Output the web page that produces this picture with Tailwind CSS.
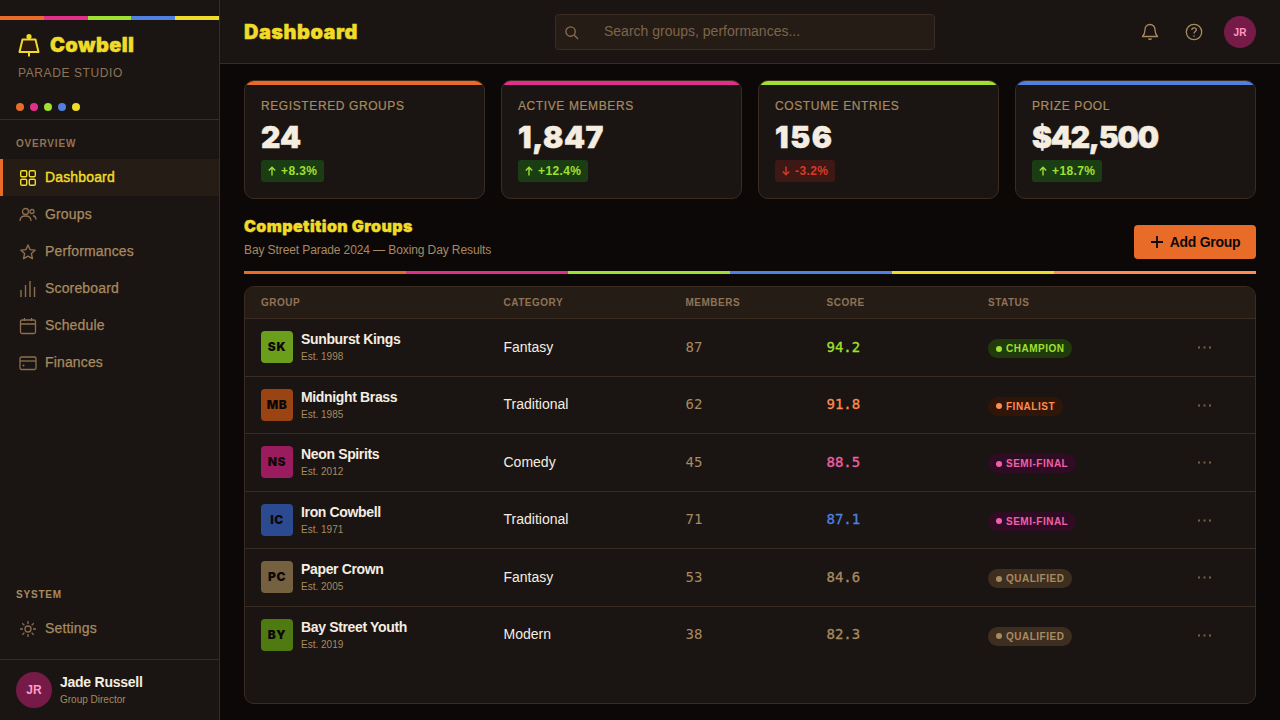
<!DOCTYPE html>
<html lang="en">
<head>
    <meta charset="UTF-8">
    <meta name="viewport" content="width=device-width, initial-scale=1.0">
    <title>Cowbell - Dashboard</title>
    <script src="https://cdn.jsdelivr.net/npm/@tailwindcss/browser@4"></script>
</head>
<body class="bg-[#0d0808] font-['Liberation_Sans',Arial,sans-serif] text-[#f5ede0] overflow-hidden">
<div class="flex h-[720px] w-[1280px] overflow-hidden">

    <!-- Sidebar -->
    <aside class="flex h-full w-[220px] shrink-0 flex-col border-r border-[#3a2c20] bg-[#1a1512]">
        <div class="mt-4 flex h-1 shrink-0">
            <div class="w-[44px] bg-[#e86c28]"></div>
            <div class="w-[44px] bg-[#e0308a]"></div>
            <div class="w-[43px] bg-[#a0e030]"></div>
            <div class="w-[44px] bg-[#5080e0]"></div>
            <div class="flex-1 bg-[#f0dc28]"></div>
        </div>
        <div class="h-[100px] shrink-0 border-b border-[#3a2c20] pl-4 pt-[13px]">
            <div class="flex items-center gap-[10px] pl-[2px]">
                <svg class="h-6 w-[22px]" viewBox="0 0 22 24" fill="none" stroke="#f0dc28" stroke-width="2">
                    <circle cx="11" cy="3.500" r="1.600" fill="#f0dc28"/>
                    <path d="M4.500 6.500h13L20.500 19h-19z" fill="#2e1a0c" stroke-linejoin="round"/>
                    <path d="M11 19v4.500"/>
                </svg>
                <span class="font-['Inter',sans-serif] text-[20px] leading-6 font-black tracking-[0.37px] text-[#f0dc28] [-webkit-text-stroke:0.4px_currentColor]">Cowbell</span>
            </div>
            <div class="mt-[8px] pl-[2px] text-[12px] leading-4 tracking-[0.6px] text-[#8f7355]">PARADE STUDIO</div>
            <div class="mt-[22px] flex gap-[6px]">
                <span class="size-2 rounded-full bg-[#e86c28]"></span>
                <span class="size-2 rounded-full bg-[#e0308a]"></span>
                <span class="size-2 rounded-full bg-[#a0e030]"></span>
                <span class="size-2 rounded-full bg-[#5080e0]"></span>
                <span class="size-2 rounded-full bg-[#f0dc28]"></span>
            </div>
        </div>

        <div class="pl-4 pt-[18px] pb-[9px] text-[10px] leading-[12px] font-bold tracking-[0.8px] text-[#8f7355]">OVERVIEW</div>
        <nav class="text-[14px] tracking-[0.15px] text-[#a88a60] [-webkit-text-stroke:0.25px_currentColor]">
            <a class="flex h-[37px] items-center gap-[8px] border-l-[3px] border-[#e86c28] bg-[#261c16] pl-4 text-[#f0dc28] [-webkit-text-stroke:0.4px_currentColor]">
                <svg class="size-[18px]" viewBox="0 0 18 18" fill="none" stroke="currentColor" stroke-width="1.400"><rect x="1.700" y="1.700" width="6" height="6" rx="1.200"/><rect x="10.300" y="1.700" width="6" height="6" rx="1.200"/><rect x="1.700" y="10.300" width="6" height="6" rx="1.200"/><rect x="10.300" y="10.300" width="6" height="6" rx="1.200"/></svg>
                Dashboard
            </a>
            <a class="flex h-[37px] items-center gap-[8px] pl-[19px]">
                <svg class="size-[18px] text-[#8b6f4e]" viewBox="0 0 18 18" fill="none" stroke="currentColor" stroke-width="1.300"><circle cx="6.500" cy="5.500" r="3"/><path d="M1 15c0-3.300 2.400-5 5.500-5s5.500 1.700 5.500 5"/><circle cx="13" cy="5.500" r="2"/><path d="M14 9.500c1.800.5 3 2 3 4"/></svg>
                Groups
            </a>
            <a class="flex h-[37px] items-center gap-[8px] pl-[19px]">
                <svg class="size-[18px] text-[#8b6f4e]" viewBox="0 0 18 18" fill="none" stroke="currentColor" stroke-width="1.400" stroke-linejoin="round"><path d="M9 2l2.100 4.600 5 .6-3.700 3.400 1 5L9 13.100l-4.400 2.500 1-5-3.700-3.400 5-.6z"/></svg>
                Performances
            </a>
            <a class="flex h-[37px] items-center gap-[8px] pl-[19px]">
                <svg class="size-[18px] text-[#8b6f4e]" viewBox="0 0 18 18" fill="none" stroke="currentColor" stroke-width="1.400"><path d="M2 17v-7M6.500 17V5M11 17V1M15.500 17V7"/></svg>
                Scoreboard
            </a>
            <a class="flex h-[37px] items-center gap-[8px] pl-[19px]">
                <svg class="size-[18px] text-[#8b6f4e]" viewBox="0 0 18 18" fill="none" stroke="currentColor" stroke-width="1.300"><rect x="1.500" y="3" width="15" height="13.500" rx="1.500"/><path d="M1.500 7h15M5.500 1v3M12.500 1v3"/></svg>
                Schedule
            </a>
            <a class="flex h-[37px] items-center gap-[8px] pl-[19px]">
                <svg class="size-[18px] text-[#8b6f4e]" viewBox="0 0 18 18" fill="none" stroke="currentColor" stroke-width="1.300"><rect x="1" y="3" width="16" height="12.500" rx="1.500"/><path d="M1 7h16"/><circle cx="4.500" cy="11.500" r="1" fill="currentColor" stroke="none"/></svg>
                Finances
            </a>
        </nav>

        <div class="mt-auto pl-4 pb-[9px] text-[10px] leading-[12px] font-bold tracking-[0.8px] text-[#a88a60]">SYSTEM</div>
        <a class="flex h-[37px] items-center gap-[8px] pl-[19px] text-[14px] tracking-[0.15px] text-[#a88a60] [-webkit-text-stroke:0.25px_currentColor]">
            <svg class="size-[18px] text-[#8b6f4e]" viewBox="0 0 18 18" fill="none" stroke="currentColor" stroke-width="1.300"><circle cx="9" cy="9" r="3"/><path d="M9 1v3M9 14v3M1 9h3M14 9h3M3.300 3.300l2.100 2.100M12.600 12.600l2.100 2.100M3.300 14.700l2.100-2.100M12.600 5.400l2.100-2.100"/></svg>
            Settings
        </a>
        <div class="mt-[12px] flex h-[61px] shrink-0 items-center gap-2 border-t border-[#3a2c20] pl-4">
            <div class="flex size-9 items-center justify-center rounded-full bg-[#761a48] text-[12px] font-bold text-[#ff9ac8]">JR</div>
            <div>
                <div class="text-[14px] leading-[17px] font-bold tracking-[-0.25px] text-[#f5ede0]">Jade Russell</div>
                <div class="mt-[2px] text-[10px] leading-[13px] text-[#a88a60]">Group Director</div>
            </div>
        </div>
    </aside>

    <!-- Main -->
    <div class="flex h-full min-w-0 flex-1 flex-col">
        <header class="relative flex h-[64px] shrink-0 items-center justify-between border-b border-[#3a2c20] bg-[#1a1512] px-6 pt-px">
            <h1 class="font-['Inter',sans-serif] text-[20px] font-black tracking-[0.47px] text-[#f0dc28] [-webkit-text-stroke:0.4px_currentColor]">Dashboard</h1>
            <div class="absolute left-[335px] top-[14px] flex h-9 w-[380px] items-center rounded border border-[#3a2c20] bg-[#261c16] pl-2">
                <svg class="size-[15px] text-[#8b6f4e]" viewBox="0 0 16 16" fill="none" stroke="currentColor" stroke-width="1.400"><circle cx="7" cy="7" r="5"/><path d="M11 11l4 4"/></svg>
                <span class="-mt-[1px] ml-[25px] text-[14px] text-[#7d654a]">Search groups, performances...</span>
            </div>
            <div class="flex items-center">
                <svg class="size-[18px] text-[#a88a60]" viewBox="0 0 18 18" fill="none" stroke="currentColor" stroke-width="1.300" stroke-linejoin="round"><path d="M9 1.500c-3 0-5 2.300-5 5.200 0 4-1.500 5.800-2.500 6.800h15c-1-1-2.500-2.800-2.500-6.800 0-2.900-2-5.200-5-5.200z"/><path d="M7.500 15.500c.3 1 2.700 1 3 0"/></svg>
                <svg class="ml-[26px] size-[18px] text-[#a88a60]" viewBox="0 0 18 18" fill="none" stroke="currentColor" stroke-width="1.300"><circle cx="9" cy="9" r="7.700"/><path d="M6.800 7c0-1.300 1-2.200 2.300-2.200s2.200.9 2.200 2c0 1.700-2.300 1.800-2.300 3.700"/><circle cx="9" cy="13" r=".8" fill="currentColor" stroke="none"/></svg>
                <div class="ml-[21px] flex size-8 items-center justify-center rounded-full bg-[#761a48] text-[10px] font-bold text-[#ff9ac8]">JR</div>
            </div>
        </header>

        <main class="flex min-h-0 flex-1 flex-col px-6 pt-4 pb-4">
            <!-- Stat cards -->
            <section class="grid shrink-0 grid-cols-4 gap-4">
                <div class="h-[119px] overflow-hidden rounded-[10px] border border-[#3a2c20] bg-[#1a1512]">
                    <div class="h-1 bg-[#e86c28]"></div>
                    <div class="px-4 pt-[13px]">
                        <div class="text-[12px] leading-4 tracking-[0.6px] text-[#a88a60] [-webkit-text-stroke:0.2px_currentColor]">REGISTERED GROUPS</div>
                        <div class="mt-[5px] font-['Inter',sans-serif] text-[30px] leading-9 font-black text-[#f5ede0] [-webkit-text-stroke:0.5px_currentColor]">24</div>
                        <div class="mt-[5px] inline-flex h-[22px] items-center gap-[4px] rounded-[3px] bg-[#1a3d14] pr-[7px] pl-[6px] text-[12px] font-bold tracking-[0.4px] text-[#a0e030]">
                            <svg class="size-[10px]" viewBox="0 0 10 10" fill="none" stroke="currentColor" stroke-width="1.400"><path d="M5 9.500V1.500M1.800 4.500L5 1.300l3.200 3.200"/></svg>+8.3%
                        </div>
                    </div>
                </div>
                <div class="h-[119px] overflow-hidden rounded-[10px] border border-[#3a2c20] bg-[#1a1512]">
                    <div class="h-1 bg-[#e0308a]"></div>
                    <div class="px-4 pt-[13px]">
                        <div class="text-[12px] leading-4 tracking-[0.6px] text-[#a88a60] [-webkit-text-stroke:0.2px_currentColor]">ACTIVE MEMBERS</div>
                        <div class="mt-[5px] font-['Inter',sans-serif] text-[30px] leading-9 font-black tracking-[0.6px] text-[#f5ede0] [-webkit-text-stroke:0.5px_currentColor]">1,847</div>
                        <div class="mt-[5px] inline-flex h-[22px] items-center gap-[4px] rounded-[3px] bg-[#1a3d14] pr-[7px] pl-[6px] text-[12px] font-bold tracking-[0.4px] text-[#a0e030]">
                            <svg class="size-[10px]" viewBox="0 0 10 10" fill="none" stroke="currentColor" stroke-width="1.400"><path d="M5 9.500V1.500M1.800 4.500L5 1.300l3.200 3.200"/></svg>+12.4%
                        </div>
                    </div>
                </div>
                <div class="h-[119px] overflow-hidden rounded-[10px] border border-[#3a2c20] bg-[#1a1512]">
                    <div class="h-1 bg-[#a0e030]"></div>
                    <div class="px-4 pt-[13px]">
                        <div class="text-[12px] leading-4 tracking-[0.6px] text-[#a88a60] [-webkit-text-stroke:0.2px_currentColor]">COSTUME ENTRIES</div>
                        <div class="mt-[5px] font-['Inter',sans-serif] text-[30px] leading-9 font-black tracking-[1.6px] text-[#f5ede0] [-webkit-text-stroke:0.5px_currentColor]">156</div>
                        <div class="mt-[5px] inline-flex h-[22px] items-center gap-[4px] rounded-[3px] bg-[#3d1814] pr-[7px] pl-[6px] text-[12px] font-bold tracking-[0.4px] text-[#d83a28]">
                            <svg class="size-[10px]" viewBox="0 0 10 10" fill="none" stroke="currentColor" stroke-width="1.400"><path d="M5 .5v8M1.800 5.500L5 8.700l3.200-3.200"/></svg>-3.2%
                        </div>
                    </div>
                </div>
                <div class="h-[119px] overflow-hidden rounded-[10px] border border-[#3a2c20] bg-[#1a1512]">
                    <div class="h-1 bg-[#5080e0]"></div>
                    <div class="px-4 pt-[13px]">
                        <div class="text-[12px] leading-4 tracking-[0.6px] text-[#a88a60] [-webkit-text-stroke:0.2px_currentColor]">PRIZE POOL</div>
                        <div class="mt-[5px] font-['Inter',sans-serif] text-[30px] leading-9 font-black tracking-[-1.2px] text-[#f5ede0] [-webkit-text-stroke:0.5px_currentColor]">$42,500</div>
                        <div class="mt-[5px] inline-flex h-[22px] items-center gap-[4px] rounded-[3px] bg-[#1a3d14] pr-[7px] pl-[6px] text-[12px] font-bold tracking-[0.4px] text-[#a0e030]">
                            <svg class="size-[10px]" viewBox="0 0 10 10" fill="none" stroke="currentColor" stroke-width="1.400"><path d="M5 9.500V1.500M1.800 4.500L5 1.300l3.200 3.200"/></svg>+18.7%
                        </div>
                    </div>
                </div>
            </section>

            <!-- Section heading -->
            <section class="mt-[17px] flex h-[43px] shrink-0 items-end justify-between">
                <div>
                    <h2 class="font-['Inter',sans-serif] text-[16px] leading-5 font-black tracking-[0.4px] text-[#f0dc28] [-webkit-text-stroke:0.4px_currentColor]">Competition Groups</h2>
                    <p class="mt-[5px] text-[12px] leading-[18px] tracking-[-0.1px] text-[#a88a60]">Bay Street Parade 2024 — Boxing Day Results</p>
                </div>
                <button class="flex h-[34px] w-[122px] items-center justify-center gap-[6px] rounded bg-[#e86c28] text-[14px] font-bold tracking-[-0.3px] text-[#0d0808]">
                    <svg class="size-[14px]" viewBox="0 0 14 14" fill="none" stroke="currentColor" stroke-width="1.800"><path d="M7 1v12M1 7h12"/></svg>
                    Add Group
                </button>
            </section>
            <div class="mt-[12px] flex h-[3px] shrink-0">
                <div class="w-[16%] bg-[#e86c28]"></div>
                <div class="w-[16%] bg-[#e0308a]"></div>
                <div class="w-[16%] bg-[#a0e030]"></div>
                <div class="w-[16%] bg-[#5080e0]"></div>
                <div class="w-[16%] bg-[#f0dc28]"></div>
                <div class="flex-1 bg-[#ff8c50]"></div>
            </div>

            <!-- Table -->
            <section class="mt-3 min-h-0 flex-1 overflow-hidden rounded-[10px] border border-[#3a2c20] bg-[#1a1512]">
                <div class="grid h-[32px] grid-cols-[242.5px_182px_141px_161.5px_1fr] items-center border-b border-[#3a2c20] bg-[#261c16] pl-4 text-[10px] font-bold tracking-[0.5px] text-[#8f7355]">
                    <div>GROUP</div><div>CATEGORY</div><div>MEMBERS</div><div>SCORE</div><div>STATUS</div>
                </div>

                <div class="grid h-[57.5px] grid-cols-[242.5px_182px_141px_161.5px_210px_1fr] items-center border-b border-[#3a2c20] pl-4">
                    <div class="flex items-center gap-2">
                        <div class="flex size-8 items-center justify-center rounded bg-[#6b9e1a] font-['Inter',sans-serif] text-[12px] font-black tracking-[0.6px] text-[#0d0808]">SK</div>
                        <div><div class="text-[14px] leading-[17px] font-bold tracking-[-0.35px]">Sunburst Kings</div><div class="mt-[2px] text-[10px] leading-[13px] text-[#a88a60]">Est. 1998</div></div>
                    </div>
                    <div class="text-[14px]">Fantasy</div>
                    <div class="font-['DejaVu_Sans_Mono',monospace] text-[14px] text-[#a88a60]">87</div>
                    <div class="font-['DejaVu_Sans_Mono',monospace] text-[14px] text-[#a0e030] [-webkit-text-stroke:0.3px_currentColor]">94.2</div>
                    <div class="flex"><span class="mt-[3px] inline-flex h-[19px] items-center gap-[4px] rounded-full bg-[#203a0c] pr-[8px] pl-[8px] text-[10px] font-bold tracking-[0.5px] text-[#a0e030]"><i class="size-[6px] rounded-full bg-[#a0e030]"></i>CHAMPION</span></div>
                    <svg class="mt-px h-[3px] w-[13px] text-[#7a6040]" viewBox="0 0 13 3" fill="currentColor"><rect x="0" y="0.500" width="2" height="2"/><rect x="5.500" y="0.500" width="2" height="2"/><rect x="11" y="0.500" width="2" height="2"/></svg>
                </div>
                <div class="grid h-[57.5px] grid-cols-[242.5px_182px_141px_161.5px_210px_1fr] items-center border-b border-[#3a2c20] pl-4">
                    <div class="flex items-center gap-2">
                        <div class="flex size-8 items-center justify-center rounded bg-[#9a4414] font-['Inter',sans-serif] text-[12px] font-black tracking-[0.6px] text-[#0d0808]">MB</div>
                        <div><div class="text-[14px] leading-[17px] font-bold tracking-[-0.35px]">Midnight Brass</div><div class="mt-[2px] text-[10px] leading-[13px] text-[#a88a60]">Est. 1985</div></div>
                    </div>
                    <div class="text-[14px]">Traditional</div>
                    <div class="font-['DejaVu_Sans_Mono',monospace] text-[14px] text-[#a88a60]">62</div>
                    <div class="font-['DejaVu_Sans_Mono',monospace] text-[14px] text-[#ff8c50] [-webkit-text-stroke:0.3px_currentColor]">91.8</div>
                    <div class="flex"><span class="mt-[3px] inline-flex h-[19px] items-center gap-[4px] rounded-full bg-[#301608] pr-[8px] pl-[8px] text-[10px] font-bold tracking-[0.5px] text-[#ff8c50]"><i class="size-[6px] rounded-full bg-[#ff8c50]"></i>FINALIST</span></div>
                    <svg class="mt-px h-[3px] w-[13px] text-[#7a6040]" viewBox="0 0 13 3" fill="currentColor"><rect x="0" y="0.500" width="2" height="2"/><rect x="5.500" y="0.500" width="2" height="2"/><rect x="11" y="0.500" width="2" height="2"/></svg>
                </div>
                <div class="grid h-[57.5px] grid-cols-[242.5px_182px_141px_161.5px_210px_1fr] items-center border-b border-[#3a2c20] pl-4">
                    <div class="flex items-center gap-2">
                        <div class="flex size-8 items-center justify-center rounded bg-[#9a1c5e] font-['Inter',sans-serif] text-[12px] font-black tracking-[0.6px] text-[#0d0808]">NS</div>
                        <div><div class="text-[14px] leading-[17px] font-bold tracking-[-0.35px]">Neon Spirits</div><div class="mt-[2px] text-[10px] leading-[13px] text-[#a88a60]">Est. 2012</div></div>
                    </div>
                    <div class="text-[14px]">Comedy</div>
                    <div class="font-['DejaVu_Sans_Mono',monospace] text-[14px] text-[#a88a60]">45</div>
                    <div class="font-['DejaVu_Sans_Mono',monospace] text-[14px] text-[#f060a8] [-webkit-text-stroke:0.3px_currentColor]">88.5</div>
                    <div class="flex"><span class="mt-[3px] inline-flex h-[19px] items-center gap-[4px] rounded-full bg-[#300c24] pr-[8px] pl-[8px] text-[10px] font-bold tracking-[0.5px] text-[#f060a8]"><i class="size-[6px] rounded-full bg-[#f060a8]"></i>SEMI-FINAL</span></div>
                    <svg class="mt-px h-[3px] w-[13px] text-[#7a6040]" viewBox="0 0 13 3" fill="currentColor"><rect x="0" y="0.500" width="2" height="2"/><rect x="5.500" y="0.500" width="2" height="2"/><rect x="11" y="0.500" width="2" height="2"/></svg>
                </div>
                <div class="grid h-[57.5px] grid-cols-[242.5px_182px_141px_161.5px_210px_1fr] items-center border-b border-[#3a2c20] pl-4">
                    <div class="flex items-center gap-2">
                        <div class="flex size-8 items-center justify-center rounded bg-[#2c4a90] font-['Inter',sans-serif] text-[12px] font-black tracking-[0.6px] text-[#0d0808]">IC</div>
                        <div><div class="text-[14px] leading-[17px] font-bold tracking-[-0.35px]">Iron Cowbell</div><div class="mt-[2px] text-[10px] leading-[13px] text-[#a88a60]">Est. 1971</div></div>
                    </div>
                    <div class="text-[14px]">Traditional</div>
                    <div class="font-['DejaVu_Sans_Mono',monospace] text-[14px] text-[#a88a60]">71</div>
                    <div class="font-['DejaVu_Sans_Mono',monospace] text-[14px] text-[#5080e0] [-webkit-text-stroke:0.3px_currentColor]">87.1</div>
                    <div class="flex"><span class="mt-[3px] inline-flex h-[19px] items-center gap-[4px] rounded-full bg-[#300c24] pr-[8px] pl-[8px] text-[10px] font-bold tracking-[0.5px] text-[#f060a8]"><i class="size-[6px] rounded-full bg-[#f060a8]"></i>SEMI-FINAL</span></div>
                    <svg class="mt-px h-[3px] w-[13px] text-[#7a6040]" viewBox="0 0 13 3" fill="currentColor"><rect x="0" y="0.500" width="2" height="2"/><rect x="5.500" y="0.500" width="2" height="2"/><rect x="11" y="0.500" width="2" height="2"/></svg>
                </div>
                <div class="grid h-[57.5px] grid-cols-[242.5px_182px_141px_161.5px_210px_1fr] items-center border-b border-[#3a2c20] pl-4">
                    <div class="flex items-center gap-2">
                        <div class="flex size-8 items-center justify-center rounded bg-[#75603f] font-['Inter',sans-serif] text-[12px] font-black tracking-[0.6px] text-[#0d0808]">PC</div>
                        <div><div class="text-[14px] leading-[17px] font-bold tracking-[-0.35px]">Paper Crown</div><div class="mt-[2px] text-[10px] leading-[13px] text-[#a88a60]">Est. 2005</div></div>
                    </div>
                    <div class="text-[14px]">Fantasy</div>
                    <div class="font-['DejaVu_Sans_Mono',monospace] text-[14px] text-[#a88a60]">53</div>
                    <div class="font-['DejaVu_Sans_Mono',monospace] text-[14px] text-[#a88a60] [-webkit-text-stroke:0.3px_currentColor]">84.6</div>
                    <div class="flex"><span class="mt-[3px] inline-flex h-[19px] items-center gap-[4px] rounded-full bg-[#3e2e20] pr-[8px] pl-[8px] text-[10px] font-bold tracking-[0.5px] text-[#a88a60]"><i class="size-[6px] rounded-full bg-[#a88a60]"></i>QUALIFIED</span></div>
                    <svg class="mt-px h-[3px] w-[13px] text-[#7a6040]" viewBox="0 0 13 3" fill="currentColor"><rect x="0" y="0.500" width="2" height="2"/><rect x="5.500" y="0.500" width="2" height="2"/><rect x="11" y="0.500" width="2" height="2"/></svg>
                </div>
                <div class="grid h-[57.5px] grid-cols-[242.5px_182px_141px_161.5px_210px_1fr] items-center border-b border-transparent pl-4">
                    <div class="flex items-center gap-2">
                        <div class="flex size-8 items-center justify-center rounded bg-[#4f7a12] font-['Inter',sans-serif] text-[12px] font-black tracking-[0.6px] text-[#0d0808]">BY</div>
                        <div><div class="text-[14px] leading-[17px] font-bold tracking-[-0.35px]">Bay Street Youth</div><div class="mt-[2px] text-[10px] leading-[13px] text-[#a88a60]">Est. 2019</div></div>
                    </div>
                    <div class="text-[14px]">Modern</div>
                    <div class="font-['DejaVu_Sans_Mono',monospace] text-[14px] text-[#a88a60]">38</div>
                    <div class="font-['DejaVu_Sans_Mono',monospace] text-[14px] text-[#a88a60] [-webkit-text-stroke:0.3px_currentColor]">82.3</div>
                    <div class="flex"><span class="mt-[3px] inline-flex h-[19px] items-center gap-[4px] rounded-full bg-[#3e2e20] pr-[8px] pl-[8px] text-[10px] font-bold tracking-[0.5px] text-[#a88a60]"><i class="size-[6px] rounded-full bg-[#a88a60]"></i>QUALIFIED</span></div>
                    <svg class="mt-px h-[3px] w-[13px] text-[#7a6040]" viewBox="0 0 13 3" fill="currentColor"><rect x="0" y="0.500" width="2" height="2"/><rect x="5.500" y="0.500" width="2" height="2"/><rect x="11" y="0.500" width="2" height="2"/></svg>
                </div>
            </section>
        </main>
    </div>
</div>
</body>
</html>
